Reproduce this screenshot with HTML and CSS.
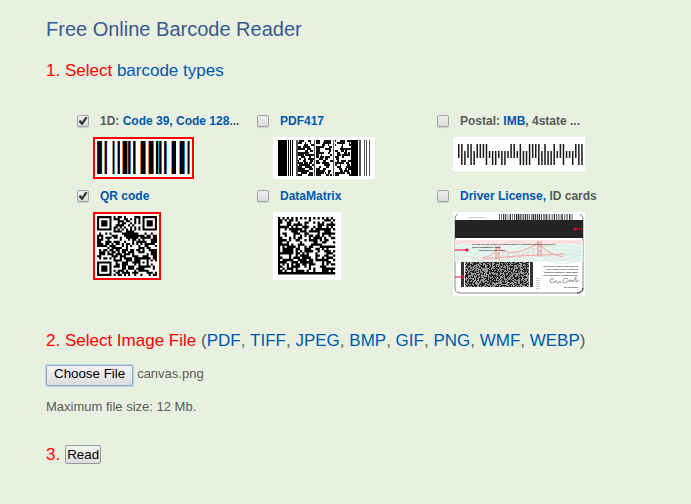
FILE: index.html
```html
<!DOCTYPE html>
<html lang="en">
<head>
<meta charset="utf-8">
<meta name="viewport" content="width=device-width, initial-scale=1">
<title>Free Online Barcode Reader</title>
<link rel="stylesheet" href="styles.css">
</head>
<body>
<main class="page">
  <h1 class="title">Free Online Barcode Reader</h1>
  <h2 class="step"><span class="num">1. Select</span> <a href="#types">barcode types</a></h2>

  <div class="types" id="types">
    <div class="type">
      <input class="check" type="checkbox" id="t1d" checked>
      <label class="name" for="t1d">1D: <a href="#code39">Code 39,</a> <a href="#code128">Code 128</a>...</label>
      <svg class="sample selected" width="97" height="38" viewBox="0 0 97 38" shape-rendering="crispEdges" aria-hidden="true">
        <rect width="97" height="38" fill="#fff"/>
        <path fill="#000" d="M3 2h3v33h-3zM10 2h1v33h-1zM18 2h1v33h-1zM23 2h1v33h-1zM28 2h4v33h-4zM34 2h1v33h-1zM39 2h1v33h-1zM46 2h4v33h-4zM54 2h4v33h-4zM61 2h2v33h-2zM65 2h1v33h-1zM70 2h1v33h-1zM77 2h4v33h-4zM85 2h4v33h-4zM93 2h1v33h-1z"/>
        <path fill="#d98a3c" d="M9 2h1v33h-1zM17 2h1v33h-1zM22 2h1v33h-1zM27 2h1v33h-1zM45 2h1v33h-1zM53 2h1v33h-1zM76 2h1v33h-1zM84 2h1v33h-1zM92 2h1v33h-1z"/>
        <path fill="#701010" d="M2 2h1v33h-1zM33 2h1v33h-1zM38 2h1v33h-1zM64 2h1v33h-1zM69 2h1v33h-1z"/>
        <path fill="#16107c" d="M6 2h1v33h-1zM11 2h1v33h-1zM24 2h1v33h-1z"/>
        <path fill="#2676d4" d="M19 2h1v33h-1zM35 2h1v33h-1zM40 2h1v33h-1zM50 2h1v33h-1zM58 2h1v33h-1zM66 2h1v33h-1zM71 2h1v33h-1zM89 2h1v33h-1zM94 2h1v33h-1z"/>
        <path fill="#2fb0a8" d="M32 2h1v33h-1zM63 2h1v33h-1z"/>
        <path fill="#c8f2fc" d="M7 2h1v33h-1zM12 2h1v33h-1z"/>
        <path fill="#fdf0b8" d="M60 2h1v33h-1zM68 2h1v33h-1zM91 2h1v33h-1z"/>
      </svg>
    </div>
    <div class="type">
      <input class="check" type="checkbox" id="tpdf">
      <label class="name" for="tpdf"><a href="#pdf417">PDF417</a></label>
      <svg class="sample" width="102" height="42" viewBox="0 0 102 42" aria-hidden="true">
        <rect width="102" height="42" fill="#fff"/>
        <path fill="#000" d="M5 3h9v36h-9zM15 3h1v36h-1zM17 3h1v36h-1zM19 3h1v36h-1zM78 3h7v36h-7z"/>
        <path fill="#555" d="M23 3h2v36h-2zM41 3h1v36h-1zM60 3h1v36h-1zM86 3h2v36h-2zM91 3h1v36h-1zM93 3h1v36h-1zM96 3h1v36h-1z"/>
        <path id="pdf-codes" fill="#111"/>
      </svg>
    </div>
    <div class="type">
      <input class="check" type="checkbox" id="tpostal">
      <label class="name" for="tpostal">Postal: <a href="#imb">IMB</a>, 4state ...</label>
      <svg class="sample" width="132" height="34" viewBox="0 0 132 34" aria-hidden="true">
        <rect width="132" height="34" fill="#fff"/>
        <path id="postal-bars" fill="#1a1a1a"/>
      </svg>
    </div>
    <div class="type">
      <input class="check" type="checkbox" id="tqr" checked>
      <label class="name" for="tqr"><a href="#qr">QR code</a></label>
      <svg class="sample selected" width="64" height="64" viewBox="-1 -1 31 31" aria-hidden="true">
        <rect x="-1" y="-1" width="31" height="31" fill="#fff"/>
        <path id="qr-modules" fill="#000"/>
      </svg>
    </div>
    <div class="type">
      <input class="check" type="checkbox" id="tdm">
      <label class="name" for="tdm"><a href="#datamatrix">DataMatrix</a></label>
      <svg class="sample" width="68" height="68" viewBox="0 0 68 68" aria-hidden="true">
        <rect width="68" height="68" fill="#fff"/>
        <path id="dm-modules" fill="#000" transform="translate(5 5) scale(2.2)"/>
      </svg>
    </div>
    <div class="type">
      <input class="check" type="checkbox" id="tdl">
      <label class="name" for="tdl"><a href="#license">Driver License,</a> ID cards</label>
      <svg class="sample" width="132" height="84" viewBox="0 0 132 84" aria-hidden="true">
        <rect width="132" height="84" fill="#fff"/>
        <path fill="none" stroke="#888" stroke-width="1" d="M5 2Q2 3 2 7V76Q2 81 7 81H125Q130 81 130 77V7Q130 3 127 2"/>
        <path fill="none" stroke="#333" d="M124 81q5 0 6-5"/>
        <path id="dl-top" fill="#333"/>
        <text x="14" y="6" class="micro small">YOUTRUSTWORTHY</text>
        <rect x="2" y="8" width="128" height="18" fill="#242424"/>
        <rect x="2" y="28" width="128" height="22" fill="#e8f5ef"/>
        <path fill="#fbe5e4" d="M2 28h128v4H2z"/>
        <g fill="none" stroke="#bfe3d5" stroke-width=".5">
          <path d="M3 38q15-12 30 0t30 0 30 0 36 0M3 42q15-12 30 0t30 0 30 0 36 0M3 46q15-12 30 0t30 0 30 0 36 0M62 50q15-22 66-14M75 50q15-18 54-10M88 50q15-14 41-6"/>
        </g>
        <path fill="none" stroke="#f4b8b7" stroke-width=".5" d="M3 32q12-5 24 0t24 0 24 0 24 0 30 0M3 48q12-7 24 0t24 0 24 0"/>
        <path fill="none" stroke="#f3a5a3" d="M29 46Q42 44 44 35Q60 48 86 30Q91 41 110 45M30 47L64 44L112 42"/>
        <path fill="none" stroke="#f3a5a3" stroke-width=".5" d="M50 38v8M55 41v5M60 42v4M65 42v3M70 41v4M75 39v6M80 36v8M96 39v5M102 42v2"/>
        <path stroke="#ef9492" stroke-width="1" d="M43 34v14M46 34v14M43 38h3M43 42h3M85 29v16M88 29v16M85 34h3M85 39h3"/>
        <svg class="micro dark" width="132" height="84" viewBox="0 0 264 168">
          <text x="38" y="66">CLASS: Is Any vehicle or combination of vehicles except motorcycles</text>
          <text x="38" y="72">ENDORSEMENTS: None</text>
          <text x="52" y="78">RESTRICTIONS: None</text>
        </svg>
        <path fill="#333" d="M8 50h3v25H8zM77 50h3v25h-3z"/>
        <path fill="#999" d="M12 50h64v25H12z"/>
        <path id="dl-codes" fill="#222"/>
        <g class="micro dark small" text-anchor="end">
          <text x="125" y="55">This license is issued as a license to</text>
          <text x="125" y="58">drive a motor vehicle; it does not</text>
          <text x="125" y="61">establish eligibility for employment,</text>
          <text x="125" y="64">voter registration, or public benefits.</text>
          <text x="125" y="76">Rev 02/10/2010</text>
        </g>
        <path fill="none" stroke="#555" stroke-width=".6" d="M101 67q-4-1-4 2t5 1q1-3 2 0t3-1l1 2M115 67q-5-2-5 2t5 0q2-3 2 1l2-2 1 2 3-5v5l3-2"/>
        <path stroke="#999" stroke-width="1" stroke-dasharray="1 1" d="M84 66v11M86 66v11"/>
        <path stroke="#f0002c" d="M2 38h11M2 65h8M122 17h8"/>
        <g fill="#f0002c"><circle cx="14" cy="38" r="1.6"/><circle cx="10" cy="65" r="1.6"/><circle cx="122" cy="17" r="1.6"/></g>
      </svg>
    </div>
  </div>

  <h2 class="step"><span class="num">2. Select Image File</span> (<a href="#pdf">PDF</a>, <a href="#tiff">TIFF</a>, <a href="#jpeg">JPEG</a>, <a href="#bmp">BMP</a>, <a href="#gif">GIF</a>, <a href="#png">PNG</a>, <a href="#wmf">WMF</a>, <a href="#webp">WEBP</a>)</h2>
  <div class="file">
    <button class="button choose" type="button" id="choose">Choose File</button>
    <span id="file-name">canvas.png</span>
    <input type="file" id="file" aria-labelledby="choose" hidden>
  </div>
  <p class="note">Maximum file size: 12 Mb.</p>
  <div class="step read-row"><span class="num">3.</span> <button class="button read" type="button">Read</button></div>
</main>
<script src="barcodes.js"></script>
</body>
</html>
```
FILE: styles.css
```css
body {
  margin: 0;
  background: #e8f1df;
  color: #5a5a5a;
  font: 13px/20px "Liberation Sans", Arial, sans-serif;
  font-kerning: none;
}

a {
  color: #0057ae;
  text-decoration: none;
}

.page {
  padding: 17px 46px 24px;
}

.title {
  margin: 0;
  color: #365a91;
  font-size: 20px;
  font-weight: 400;
  line-height: 24px;
}

.step {
  margin: 0;
  font-size: 17px;
  font-weight: 400;
  line-height: 20px;
}

.title + .step {
  margin-top: 20px;
}

.num {
  color: #f00;
}

.types {
  display: grid;
  grid-template-columns: repeat(3, minmax(0, 180px));
  row-gap: 9px;
  margin: 32px 0 35px;
  padding-left: 31px;
}

.type {
  display: grid;
  grid-template-columns: 12px 1fr;
  grid-template-rows: 16px auto;
  column-gap: 11px;
  row-gap: 8px;
  align-content: start;
}

.check {
  appearance: none;
  display: grid;
  place-items: center;
  align-self: center;
  box-sizing: border-box;
  width: 12px;
  height: 12px;
  margin: 0;
  border: 1px solid #a4a4a4;
  border-radius: 2px;
  background: linear-gradient(#eee, #dcdcdc);
  box-shadow: 0 1px 1px #0002;
}

.check:checked::before {
  content: "";
  width: 9px;
  height: 9px;
  background: #333;
  clip-path: polygon(0 55%, 20% 38%, 40% 58%, 80% 0, 100% 15%, 45% 95%, 35% 95%);
}

.name {
  font-size: 12px;
  font-weight: 700;
  line-height: 16px;
  white-space: nowrap;
}

.sample {
  display: block;
  grid-column: 1 / -1;
  margin-left: 16px;
}

.selected {
  border: 2px solid #f00;
}

.micro {
  fill: #777;
  font-size: 5px;
}

.dark {
  fill: #222;
  font-weight: 700;
}

.small {
  font-size: 2px;
}

.button {
  box-sizing: border-box;
  border: 1px solid #999;
  border-radius: 2px;
  background: linear-gradient(#f4f4f4, #dcdcdc);
  color: #000;
  font-family: "Liberation Sans", Arial, sans-serif;
  font-kerning: none;
  line-height: 16px;
}

.file {
  display: flex;
  align-items: baseline;
  gap: 4px;
  margin-top: 13px;
}

.choose {
  height: 21px;
  padding: 0 7px 2px;
  border-color: #8ea9bd;
  box-shadow: 0 0 1px 1px #b5d4e2;
}

.note {
  margin: 11px 0 28px;
}

.read-row {
  display: flex;
  align-items: center;
  gap: 5px;
}

.read {
  height: 19px;
  padding: 0 1px;
}
```
FILE: barcodes.js
```js
// Repeatable pseudo-random bits for the sample symbols.
function bits(seed) {
  let s = seed;
  return () => {
    s = (Math.imul(s, 1664525) + 1013904223) >>> 0;
    return s / 4294967296;
  };
}
const cell = (x, y, w = 1, h = 1) => `M${x} ${y}h${w}v${h}h${-w}z`;
const draw = (id, d) => document.getElementById(id).setAttribute("d", d);

// QR version 3: finder, timing and alignment patterns around the data.
const finder = (x, y) => Math.max(Math.abs(x - 3), Math.abs(y - 3)) !== 2;
function qrModule(x, y, next) {
  const v = next() < 0.55;
  for (const [cx, cy] of [[0, 0], [22, 0], [0, 22]]) {
    const dx = x - cx, dy = y - cy;
    if (dx >= 0 && dx < 7 && dy >= 0 && dy < 7) return finder(dx, dy);
    if (dx >= -1 && dx < 8 && dy >= -1 && dy < 8) return false;
  }
  const a = Math.max(Math.abs(x - 22), Math.abs(y - 22));
  if (a < 3) return a !== 1;
  if (y === 6 || x === 6) return (x + y) % 2 === 0;
  return v;
}
let d = "", next = bits(39);
for (let y = 0; y < 29; y++)
  for (let x = 0; x < 29; x++)
    if (qrModule(x, y, next)) d += cell(x, y);
draw("qr-modules", d);

// Data Matrix 26x26: solid left and bottom edges, timing top and right.
// Runs are joined into one bar so no seam shows inside them.
d = "";
next = bits(417);
for (let y = 0; y < 26; y++) {
  let run = 0;
  for (let x = 0; x <= 26; x++) {
    const v = next() < 0.55;
    const on = x < 26 &&
      (x === 0 || y === 25 ? true : y === 0 ? x % 2 === 0 : x === 25 ? y % 2 === 1 : v);
    if (on) run++;
    else if (run) {
      d += cell(x - run, y, run, 1.1);
      run = 0;
    }
  }
}
draw("dm-modules", d);

// PDF417 codeword columns.
d = "";
next = bits(128);
for (const left of [25, 43, 62])
  for (let y = 3; y < 39; y += 2)
    for (let x = left; x < left + 15;) {
      const w = 1 + Math.floor(next() * 3);
      if (next() < 0.56) d += cell(x, y, w, 2);
      x += w;
    }
draw("pdf-codes", d);

// Four-state bars: F full, A ascender, D descender, T tracker.
d = "";
const states = "AFDAFDAAAFTDDTDDTAATFDDFAAFDFDDFTAFTTDAFF";
for (let i = 0; i < states.length; i++) {
  const s = states[i];
  const top = s === "F" || s === "A" ? 7 : 14;
  const end = s === "F" || s === "D" ? 28 : 21;
  d += cell(5 + i * 3.08, top, 1.5, end - top);
}
draw("postal-bars", d);

// Licence back: linear code at the top edge, stacked code below.
d = "";
next = bits(5);
for (let x = 46; x < 120;) {
  const w = 0.5 + next();
  d += cell(x, 2, w, 6);
  x += w + 0.5 + next();
}
draw("dl-top", d);
d = "";
for (let y = 50; y < 75; y++)
  for (let x = 12; x < 76; x++)
    if (next() < 0.5) d += cell(x, y);
draw("dl-codes", d);

// File picker.
const file = document.getElementById("file");
document.getElementById("choose").addEventListener("click", () => file.click());
file.addEventListener("change", () => {
  if (file.files[0]) document.getElementById("file-name").textContent = file.files[0].name;
});
```
